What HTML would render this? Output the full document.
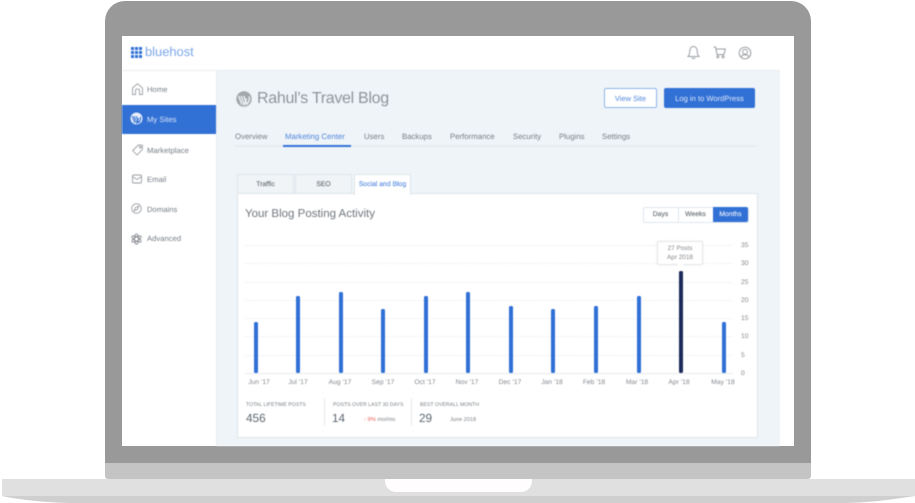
<!DOCTYPE html>
<html><head><meta charset="utf-8">
<style>
html,body{margin:0;padding:0;background:#fff}
body{width:915px;height:503px;position:relative;overflow:hidden;font-family:"Liberation Sans",sans-serif;text-rendering:geometricPrecision}
.b{position:absolute}
.t{position:absolute;white-space:nowrap;line-height:16px;height:16px}
.c{text-align:center}
.nav{font-size:7.8px;color:#767d86}
.side{font-size:7.7px;color:#767d86}
.ax{font-size:6.7px;color:#85898f}
.lbl{font-size:5.2px;color:#7d8288}
.num{font-size:11.8px;color:#5b6570}
.tab{font-size:6.8px;-webkit-text-stroke:.15px currentColor}
svg{position:absolute;overflow:visible}
#all{position:absolute;left:0;top:0;width:915px;height:503px;filter:blur(.4px)}
</style></head><body>
<!-- laptop -->
<div class="b" style="left:105px;top:1px;width:706px;height:462px;background:#999;border-radius:20px 20px 0 0"></div>
<div class="b" style="left:105px;top:463px;width:706px;height:16px;background:#c4c4c4;border-radius:0 0 3px 3px"></div>
<svg style="left:0;top:479px" width="915" height="24"><path d="M2 0H915V17H2Z" fill="#e0e0e0"/><path d="M2 17H915C895 20 870 24 840 24H75C50 24 20 21 2 17Z" fill="#cfcfcf"/></svg>
<div class="b" style="left:385px;top:479px;width:147px;height:13px;background:#fffdfe;border-radius:0 0 11px 11px"></div>
<!-- screen -->
<div class="b" style="left:122px;top:36px;width:672px;height:410px;background:#fff"></div>
<div id="all">
<div class="b" style="left:217px;top:70px;width:563px;height:376px;background:#eff4f8"></div>
<div class="b" style="left:122px;top:70px;width:658px;height:1px;background:#e9edf1"></div>
<div class="b" style="left:216px;top:70px;width:1px;height:376px;background:#e9edf1"></div>
<!-- logo -->
<svg style="left:131px;top:47px" width="11" height="11" fill="#2f6fd6"><rect width="3" height="3"/><rect x="4" width="3" height="3"/><rect x="8" width="3" height="3"/><rect y="4" width="3" height="3"/><rect x="4" y="4" width="3" height="3"/><rect x="8" y="4" width="3" height="3"/><rect y="8" width="3" height="3"/><rect x="4" y="8" width="3" height="3"/><rect x="8" y="8" width="3" height="3"/></svg>
<div class="t" style="left:145px;top:44px;font-size:12.900px;color:#7ba5e6">bluehost</div>
<!-- top icons -->
<svg style="left:687px;top:45px" width="13" height="15" fill="none" stroke="#9a9ea3" stroke-width="1"><path d="M1 11.500C2.500 10 2.700 8.500 2.700 6.500C2.700 3.500 4.300 1.500 6.500 1.500S10.300 3.500 10.300 6.500C10.300 8.500 10.500 10 12 11.500Z"/><path d="M5 12.500C5.500 14 7.500 14 8 12.500"/></svg>
<svg style="left:713px;top:46px" width="13" height="13" fill="none" stroke="#9a9ea3" stroke-width="1"><path d="M0.500 1H2.500L4 8.500H11L12.300 3H3"/><circle cx="4.800" cy="10.800" r="1"/><circle cx="10" cy="10.800" r="1"/></svg>
<svg style="left:738px;top:46px" width="14" height="14" fill="none" stroke="#9a9ea3" stroke-width="1"><circle cx="7" cy="7" r="5.800"/><circle cx="7" cy="5.800" r="2.400"/><path d="M3 11C3.800 9.300 5.200 8.800 7 8.800S10.200 9.300 11 11"/></svg>
<!-- sidebar -->
<div class="b" style="left:122px;top:105px;width:94px;height:29px;background:#3170d5"></div>
<svg style="left:132px;top:83px" width="11" height="12" fill="none" stroke="#9a9ea3" stroke-width=".9"><path d="M.5 11.500V5L5.500 .7L10.500 5V11.500H7.500V7.300C7.500 5.500 3.500 5.500 3.500 7.300V11.500Z"/></svg>
<div class="t side" style="left:147px;top:81.500px">Home</div>
<svg style="left:130px;top:112px" width="13" height="13"><circle cx="6.500" cy="6.500" r="6" fill="#eaf0fa"/><path d="M2.200 4.200L4.800 11M4 4.200L6.800 11.200L8.500 6M6.200 4.200L8.700 10.800C10 9 11 6.500 10.300 4.800" stroke="#3170d5" stroke-width="1.100" fill="none"/></svg>
<div class="t side" style="left:147px;top:111.500px;color:#dbe6f8">My Sites</div>
<svg style="left:132px;top:144px" width="11" height="12" fill="none" stroke="#9a9ea3" stroke-width=".9"><path d="M.7 6.500L6.500 .9L10.500 1.300L10.300 5.500L5 11Z"/><circle cx="8.300" cy="3.300" r=".8"/></svg>
<div class="t side" style="left:147px;top:142.500px">Marketplace</div>
<svg style="left:132px;top:174px" width="10" height="10" fill="none" stroke="#9a9ea3" stroke-width=".9"><rect x=".5" y="1" width="9" height="8" rx="1.200"/><path d="M.8 2.800L5 5.500L9.200 2.800"/></svg>
<div class="t side" style="left:147px;top:171.500px">Email</div>
<svg style="left:131px;top:203px" width="11" height="11" fill="none" stroke="#9a9ea3" stroke-width=".9"><circle cx="5.500" cy="5.500" r="4.800"/><path d="M7.800 3.200L6.500 6.500L3.200 7.800L4.500 4.500Z"/></svg>
<div class="t side" style="left:147px;top:201.500px">Domains</div>
<svg style="left:131px;top:233px" width="11" height="12" fill="none" stroke="#85898f" stroke-width=".9"><ellipse cx="5.500" cy="6" rx="2" ry="5.200"/><ellipse cx="5.500" cy="6" rx="2" ry="5.200" transform="rotate(60 5.500 6)"/><ellipse cx="5.500" cy="6" rx="2" ry="5.200" transform="rotate(120 5.500 6)"/></svg>
<div class="t side" style="left:147px;top:230.500px">Advanced</div>
<!-- title -->
<svg style="left:236px;top:91px" width="16" height="16"><circle cx="8" cy="8" r="7.700" fill="#a3a7ab"/><path d="M2.700 5L6 13.800M5.200 5L8.300 13.800L10.500 7.500M7.800 5L10.800 13.200C13 11 14 8 13 5.500" stroke="#eff4f8" stroke-width="1.400" fill="none"/></svg>
<div class="t" style="left:257px;top:89px;height:20px;line-height:20px;font-size:16px;color:#8d949c;letter-spacing:-.3px">Rahul’s Travel Blog</div>
<!-- buttons -->
<div class="b" style="left:604px;top:88px;width:51px;height:18px;border:1px solid #8fb3ea;border-radius:2px;background:#fff"></div>
<div class="t c" style="left:604px;top:91px;width:53px;font-size:7.500px;color:#4f86dc">View Site</div>
<div class="b" style="left:664px;top:88px;width:91px;height:20px;background:#3170d5;border-radius:2px"></div>
<div class="t c" style="left:664px;top:91px;width:91px;font-size:7.600px;color:#dfe9f9">Log in to WordPress</div>
<!-- tabs nav -->
<div class="b" style="left:235px;top:145px;width:521px;height:2px;background:#e8ecef"></div>
<div class="b" style="left:283px;top:145px;width:68px;height:2px;background:#3170d5"></div>
<div class="t nav" style="left:235px;top:129px">Overview</div>
<div class="t nav" style="left:285px;top:129px;color:#4f86dc">Marketing Center</div>
<div class="t nav" style="left:364px;top:129px">Users</div>
<div class="t nav" style="left:402px;top:129px">Backups</div>
<div class="t nav" style="left:450px;top:129px">Performance</div>
<div class="t nav" style="left:513px;top:129px">Security</div>
<div class="t nav" style="left:559px;top:129px">Plugins</div>
<div class="t nav" style="left:602px;top:129px">Settings</div>
<!-- card tabs -->
<div class="b" style="left:237px;top:174px;width:55px;height:19px;border:1px solid #dde4ea;border-bottom:0;background:#f0f4f7"></div>
<div class="b" style="left:295px;top:174px;width:55px;height:19px;border:1px solid #dde4ea;border-bottom:0;background:#f0f4f7"></div>
<div class="b" style="left:237px;top:193px;width:519px;height:243px;border:1px solid #dde4ea;background:#fff"></div>
<div class="b" style="left:354px;top:174px;width:55px;height:20px;border:1px solid #dde4ea;border-bottom:0;background:#fff"></div>
<div class="t c tab" style="left:237px;top:177px;width:57px;color:#6e747b">Traffic</div>
<div class="t c tab" style="left:295px;top:177px;width:57px;color:#6e747b">SEO</div>
<div class="t c tab" style="left:354px;top:177px;width:57px;color:#5b8fe0">Social and Blog</div>
<div class="t" style="left:245px;top:206px;font-size:11.500px;color:#6f757c">Your Blog Posting Activity</div>
<!-- range -->
<div class="b" style="left:643px;top:207px;width:104px;height:14px;border:1px solid #dfe6ec;border-radius:2px;background:#fff"></div>
<div class="b" style="left:678px;top:207px;width:1px;height:15px;background:#dfe6ec"></div>
<div class="b" style="left:713px;top:207px;width:35px;height:15px;background:#3170d5;border-radius:0 2px 2px 0"></div>
<div class="t c tab" style="left:643px;top:207px;width:35px;color:#6e747b">Days</div>
<div class="t c tab" style="left:678px;top:207px;width:35px;color:#6e747b">Weeks</div>
<div class="t c tab" style="left:713px;top:207px;width:35px;color:#dfe9f9">Months</div>
<!-- chart -->
<svg style="left:0;top:0" width="915" height="503">
<g stroke="#e4e6e8" stroke-width="1" stroke-dasharray="1 1.500">
<path d="M245 245.500H733M245 263.500H733M245 282.500H733M245 300.500H733M245 318.500H733M245 336.500H733M245 355.500H733"/></g>
<path d="M245 373.500H733" stroke="#e7eaed"/>
<g fill="#2f6fd6">
<rect x="254" y="322" width="4" height="51" rx="1.500"/>
<rect x="296" y="296" width="4" height="77" rx="1.500"/>
<rect x="339" y="292" width="4" height="81" rx="1.500"/>
<rect x="381" y="309" width="4" height="64" rx="1.500"/>
<rect x="424" y="296" width="4" height="77" rx="1.500"/>
<rect x="466" y="292" width="4" height="81" rx="1.500"/>
<rect x="509" y="306" width="4" height="67" rx="1.500"/>
<rect x="551" y="309" width="4" height="64" rx="1.500"/>
<rect x="594" y="306" width="4" height="67" rx="1.500"/>
<rect x="637" y="296" width="4" height="77" rx="1.500"/>
<rect x="722" y="322" width="4" height="51" rx="1.500"/>
</g>
<rect x="679" y="271" width="4" height="102" rx="1.500" fill="#1b2a5a"/>
</svg>
<!-- y axis -->
<div class="t ax" style="left:741px;top:237.500px">35</div>
<div class="t ax" style="left:741px;top:255.500px">30</div>
<div class="t ax" style="left:741px;top:274.500px">25</div>
<div class="t ax" style="left:741px;top:292.500px">20</div>
<div class="t ax" style="left:741px;top:310.500px">15</div>
<div class="t ax" style="left:741px;top:328.500px">10</div>
<div class="t ax" style="left:741px;top:347.500px">5</div>
<div class="t ax" style="left:741px;top:365.500px">0</div>
<!-- x axis -->
<div class="t ax c" style="left:234px;top:375px;width:50px">Jun ’17</div>
<div class="t ax c" style="left:273px;top:375px;width:50px">Jul ’17</div>
<div class="t ax c" style="left:315px;top:375px;width:50px">Aug ’17</div>
<div class="t ax c" style="left:358px;top:375px;width:50px">Sep ’17</div>
<div class="t ax c" style="left:400px;top:375px;width:50px">Oct ’17</div>
<div class="t ax c" style="left:442px;top:375px;width:50px">Nov ’17</div>
<div class="t ax c" style="left:485px;top:375px;width:50px">Dec ’17</div>
<div class="t ax c" style="left:527px;top:375px;width:50px">Jan ’18</div>
<div class="t ax c" style="left:569px;top:375px;width:50px">Feb ’18</div>
<div class="t ax c" style="left:612px;top:375px;width:50px">Mar ’18</div>
<div class="t ax c" style="left:654px;top:375px;width:50px">Apr ’18</div>
<div class="t ax c" style="left:698px;top:375px;width:50px">May ’18</div>
<!-- tooltip -->
<div class="b" style="left:657px;top:241px;width:46px;height:24px;background:#fff;border:1px solid #e6e8ea;box-sizing:border-box;border-radius:2px;box-shadow:0 0 2px rgba(0,0,0,.08)"></div>
<div class="b" style="left:678px;top:263px;width:5px;height:5px;background:#fff;transform:rotate(45deg)"></div>
<div class="t ax c" style="left:657px;top:243px;width:46px;font-size:6.400px;line-height:12px;height:12px">27 Posts</div>
<div class="t ax c" style="left:657px;top:252px;width:46px;font-size:6.400px;line-height:12px;height:12px">Apr 2018</div>
<!-- stats -->
<div class="t lbl" style="left:246px;top:397px">TOTAL LIFETIME POSTS</div>
<div class="t num" style="left:246px;top:410px">456</div>
<div class="b" style="left:324px;top:398px;width:1px;height:28px;background:#e6e9ec"></div>
<div class="t lbl" style="left:333px;top:397px">POSTS OVER LAST 30 DAYS</div>
<div class="t num" style="left:332px;top:410px">14</div>
<div class="t" style="left:364px;top:411.500px;font-size:5.800px;color:#7d8288"><span style="color:#e8605a">- 9%</span> mo/mo</div>
<div class="b" style="left:411px;top:398px;width:1px;height:28px;background:#e6e9ec"></div>
<div class="t lbl" style="left:420px;top:397px">BEST OVERALL MONTH</div>
<div class="t num" style="left:419px;top:410px">29</div>
<div class="t" style="left:450px;top:411.500px;font-size:5.600px;color:#7d8288">June 2018</div>
</div></body></html>
